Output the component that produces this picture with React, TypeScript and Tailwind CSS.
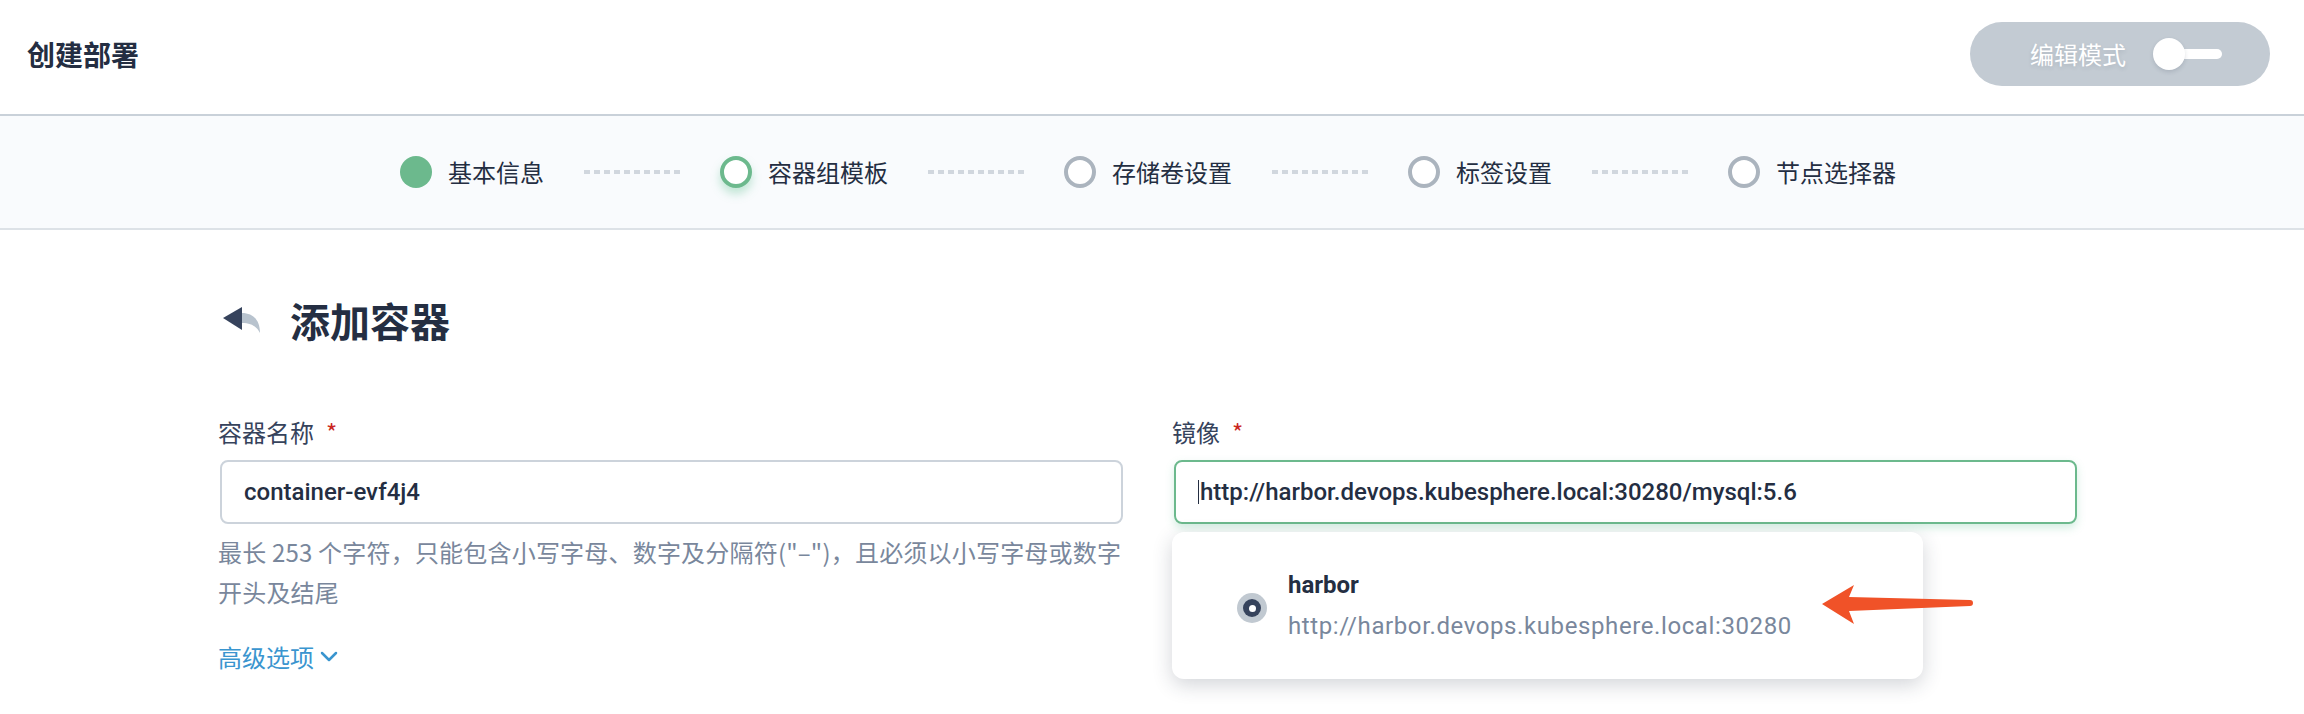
import React from "react";

type StepState = "done" | "active" | "todo";

const steps: { label: string; state: StepState }[] = [
  { label: "基本信息", state: "done" },
  { label: "容器组模板", state: "active" },
  { label: "存储卷设置", state: "todo" },
  { label: "标签设置", state: "todo" },
  { label: "节点选择器", state: "todo" },
];

function StepCircle({ state }: { state: StepState }) {
  if (state === "done") {
    return <div className="w-[32px] h-[32px] rounded-full bg-[#6cb98d]" />;
  }
  if (state === "active") {
    return (
      <div className="w-[32px] h-[32px] rounded-full bg-white border-[4px] border-[#6cb98d] shadow-[0_6px_10px_rgba(85,188,138,0.35)]" />
    );
  }
  return <div className="w-[32px] h-[32px] rounded-full bg-white border-[4px] border-[#abb4be]" />;
}

function Dots() {
  return (
    <div className="mx-[40px] flex gap-[4px]">
      {Array.from({ length: 10 }).map((_, i) => (
        <div key={i} className="w-[6px] h-[4px] bg-[#d1d7de]" />
      ))}
    </div>
  );
}

function BackIcon() {
  return (
    <svg width="38" height="30" viewBox="0 0 38 30" className="ml-[3px] shrink-0">
      <path d="M19 8 C30 8 37 15 37 28 C34 22 29 18 19 18 Z" fill="#b8c3ce" />
      <path d="M0 13 L19 2 L19 25 Z" fill="#36435c" />
    </svg>
  );
}

function Chevron() {
  return (
    <svg width="18" height="12" viewBox="0 0 18 12" className="ml-[6px]">
      <polyline points="2,2 9,9 16,2" fill="none" stroke="#3a95cf" strokeWidth="2.5" strokeLinecap="round" strokeLinejoin="round" />
    </svg>
  );
}

function RedArrow() {
  return (
    <svg width="162" height="48" viewBox="0 0 162 48" className="absolute left-[642px] top-[164px]">
      <path d="M6 24 L38 5 L33 17 L154 20 A3 3 0 0 1 154 26 L33 31 L38 44 Z" fill="#f05228" />
    </svg>
  );
}

export default function App() {
  return (
    <div className="w-full h-[714px] bg-white overflow-hidden font-['Noto_Sans_CJK_SC',sans-serif]">
      <header className="h-[116px] border-b-2 border-[#c9d1d9] flex items-center justify-between pl-[27px] pr-[34px] pb-[6px]">
        <h1 className="text-[28px] leading-[40px] font-semibold text-[#242e42]">创建部署</h1>
        <div className="w-[300px] h-[64px] rounded-full bg-[#c3cbd3] flex items-center pl-[60px]">
          <span className="text-[24px] leading-[32px] text-white [text-shadow:0_2px_4px_rgba(36,46,66,0.12)]">编辑模式</span>
          <div className="ml-[27px] flex items-center">
            <div className="relative z-10 w-[32px] h-[32px] rounded-full bg-white shadow-[0_2px_4px_rgba(36,46,66,0.15)]" />
            <div className="-ml-[16px] w-[53px] h-[10px] rounded-full bg-white" />
          </div>
        </div>
      </header>

      <div className="h-[114px] bg-[#f9fbfd] border-b-2 border-[#dde2e7] flex items-center justify-center pr-[8px]">
        {steps.map((s, i) => (
          <React.Fragment key={s.label}>
            {i > 0 && <Dots />}
            <div className="flex items-center gap-[16px]">
              <StepCircle state={s.state} />
              <span className="text-[24px] leading-[32px] text-[#242e42]">{s.label}</span>
            </div>
          </React.Fragment>
        ))}
      </div>

      <div className="pl-[220px] pr-[227px] pt-[62px]">
        <div className="flex items-center h-[56px]">
          <BackIcon />
          <h2 className="ml-[29px] text-[40px] leading-[56px] font-bold text-[#242e42]">添加容器</h2>
        </div>

        <div className="mt-[68px] grid grid-cols-2 gap-x-[51px]">
          <div>
            <label className="-ml-[2px] block text-[24px] leading-[32px] text-[#36435c]">
              容器名称<span className="ml-[12px] text-[#ca2621]">*</span>
            </label>
            <div className="mt-[12px] h-[64px] border-2 border-[#ccd3db] rounded-[8px] flex items-center pl-[22px] font-['Roboto','Noto_Sans_CJK_SC',sans-serif] text-[24px] font-medium text-[#242e42]">
              container-evf4j4
            </div>
            <p className="-ml-[2px] mt-[8px] text-[24px] leading-[40px] tracking-[0.2px] text-[#79879c] whitespace-nowrap">
              最长 253 个字符，只能包含小写字母、数字及分隔符("–")，且必须以小写字母或数字
              <br />
              开头及结尾
            </p>
            <div className="-ml-[2px] mt-[29px] flex items-center text-[24px] leading-[32px] text-[#3a95cf]">
              高级选项
              <Chevron />
            </div>
          </div>

          <div className="relative">
            <label className="-ml-[2px] block text-[24px] leading-[32px] text-[#36435c]">
              镜像<span className="ml-[12px] text-[#ca2621]">*</span>
            </label>
            <div className="mt-[12px] h-[64px] border-2 border-[#6cb98d] rounded-[8px] shadow-[0_4px_8px_rgba(85,188,138,0.25)] flex items-center pl-[22px] font-['Roboto','Noto_Sans_CJK_SC',sans-serif] text-[24px] font-medium text-[#242e42]">
              <span className="w-px h-[24px] bg-[#242e42] mr-[1px]" />
              http://harbor.devops.kubesphere.local:30280/mysql:5.6
            </div>

            <div className="absolute left-[-2px] top-[116px] w-[751px] h-[147px] bg-white rounded-[12px] shadow-[0_6px_20px_rgba(36,46,66,0.2)] flex items-center pl-[65px]">
              <div className="mt-[5px] w-[30px] h-[30px] rounded-full bg-[#c1c9d1] flex items-center justify-center">
                <div className="w-[18px] h-[18px] rounded-full bg-[#36435c] flex items-center justify-center">
                  <div className="w-[7px] h-[7px] rounded-full bg-white" />
                </div>
              </div>
              <div className="ml-[21px] flex flex-col font-['Roboto','Noto_Sans_CJK_SC',sans-serif]">
                <span className="text-[24px] leading-[32px] font-bold text-[#242e42]">harbor</span>
                <span className="mt-[9px] text-[24px] leading-[32px] tracking-[0.6px] text-[#79879c]">http://harbor.devops.kubesphere.local:30280</span>
              </div>
            </div>

            <RedArrow />
          </div>
        </div>
      </div>
    </div>
  );
}
